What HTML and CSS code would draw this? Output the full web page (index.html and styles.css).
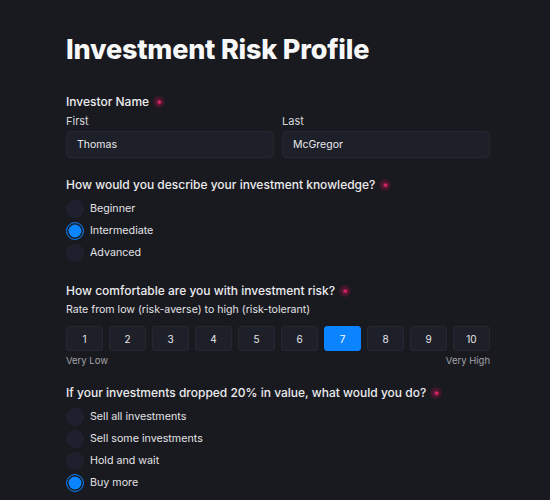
FILE: index.html
```html
<!DOCTYPE html>
<html lang="en">
<head>
<meta charset="utf-8">
<title>Investment Risk Profile</title>
<link rel="stylesheet" href="styles.css">
</head>
<body>
<main class="page">
  <h1 class="title">Investment Risk Profile</h1>

  <section class="group name-group">
    <div class="question">Investor Name <span class="req">*</span></div>
    <div class="name-row">
      <label class="name-field">
        <span class="sublabel">First</span>
        <span class="input">Thomas</span>
      </label>
      <label class="name-field">
        <span class="sublabel">Last</span>
        <span class="input">McGregor</span>
      </label>
    </div>
  </section>

  <section class="group knowledge-group">
    <div class="question">How would you describe your investment knowledge? <span class="req">*</span></div>
    <div class="radios">
      <div class="radio-row"><span class="radio"></span><span class="radio-label">Beginner</span></div>
      <div class="radio-row"><span class="radio checked"></span><span class="radio-label">Intermediate</span></div>
      <div class="radio-row"><span class="radio"></span><span class="radio-label">Advanced</span></div>
    </div>
  </section>

  <section class="group risk-group">
    <div class="question">How comfortable are you with investment risk? <span class="req">*</span></div>
    <div class="hint">Rate from low (risk-averse) to high (risk-tolerant)</div>
    <div class="scale">
      <span class="scale-btn">1</span>
      <span class="scale-btn">2</span>
      <span class="scale-btn">3</span>
      <span class="scale-btn">4</span>
      <span class="scale-btn">5</span>
      <span class="scale-btn">6</span>
      <span class="scale-btn active">7</span>
      <span class="scale-btn">8</span>
      <span class="scale-btn">9</span>
      <span class="scale-btn">10</span>
    </div>
    <div class="scale-labels"><span>Very Low</span><span>Very High</span></div>
  </section>

  <section class="group drop-group">
    <div class="question">If your investments dropped 20% in value, what would you do? <span class="req">*</span></div>
    <div class="radios">
      <div class="radio-row"><span class="radio"></span><span class="radio-label">Sell all investments</span></div>
      <div class="radio-row"><span class="radio"></span><span class="radio-label">Sell some investments</span></div>
      <div class="radio-row"><span class="radio"></span><span class="radio-label">Hold and wait</span></div>
      <div class="radio-row"><span class="radio checked"></span><span class="radio-label">Buy more</span></div>
    </div>
  </section>
</main>
</body>
</html>
```

FILE: styles.css
```css
html, body {
  margin: 0;
  padding: 0;
  background: #191a1f;
  font-family: Inter, "Noto Sans", "Liberation Sans", sans-serif;
  color: #e6e6ea;
}

.page {
  width: 424px;
  padding: 33px 0 0 66px;
}

.title {
  margin: 0;
  font-size: 27px;
  line-height: 34px;
  font-weight: 800;
  color: #f7f7f8;
  letter-spacing: -0.2px;
}

.group {
  display: flex;
  flex-direction: column;
}

.name-group { margin-top: 27px; }
.knowledge-group { margin-top: 19px; }
.risk-group { margin-top: 21px; }
.drop-group { margin-top: 18px; }

.question {
  font-size: 12px;
  line-height: 16px;
  font-weight: 500;
  color: #ececef;
  display: flex;
  align-items: center;
  gap: 4px;
}

.req {
  display: inline-flex;
  align-items: center;
  justify-content: center;
  width: 12px;
  height: 12px;
  border-radius: 50%;
  background: radial-gradient(circle, rgba(170, 20, 75, 0.5) 0%, rgba(130, 15, 60, 0.32) 60%, rgba(25, 26, 31, 0) 100%);
  color: #e8266f;
  font-size: 11px;
  line-height: 12px;
  padding-top: 3px;
  box-sizing: border-box;
}

.name-row {
  display: grid;
  grid-template-columns: 1fr 1fr;
  gap: 8px;
  margin-top: 4px;
}

.name-field {
  display: flex;
  flex-direction: column;
  gap: 3px;
}

.sublabel {
  font-size: 11px;
  line-height: 14px;
  color: #d6d6dc;
}

.input {
  box-sizing: border-box;
  height: 27px;
  padding: 0 10px;
  display: flex;
  align-items: center;
  background: #1e2029;
  border: 1px solid #242632;
  border-radius: 4px;
  font-size: 10.5px;
  color: #e8e8ec;
}

.radios {
  display: flex;
  flex-direction: column;
  gap: 4px;
  margin-top: 7px;
}

.radio-row {
  display: flex;
  align-items: center;
  gap: 6px;
  height: 18px;
}

.radio {
  box-sizing: border-box;
  width: 18px;
  height: 18px;
  border-radius: 50%;
  background: #1e212d;
  border: 1px solid #1f2230;
  flex: none;
}

.radio.checked {
  background: #0a84ff;
  border: 1.5px solid #0a6fd6;
  box-shadow: inset 0 0 0 1.5px #191a1f;
}

.radio-label {
  font-size: 10.7px;
  line-height: 14px;
  color: #e2e2e6;
}

.hint {
  margin-top: 4px;
  font-size: 10.6px;
  line-height: 14px;
  color: #e0e0e5;
}

.scale {
  display: grid;
  grid-template-columns: repeat(10, 1fr);
  gap: 6px;
  margin-top: 9px;
}

.scale-btn {
  box-sizing: border-box;
  height: 25px;
  display: flex;
  align-items: center;
  justify-content: center;
  background: #1e2029;
  border: 1px solid #252733;
  border-radius: 3px;
  font-size: 10px;
  color: #e8e8ec;
}

.scale-btn.active {
  background: #0a84ff;
  border-color: #0a84ff;
  color: #ffffff;
}

.scale-labels {
  display: flex;
  justify-content: space-between;
  margin-top: 4px;
  font-size: 9.5px;
  line-height: 12px;
  color: #a3a3ab;
}
```
